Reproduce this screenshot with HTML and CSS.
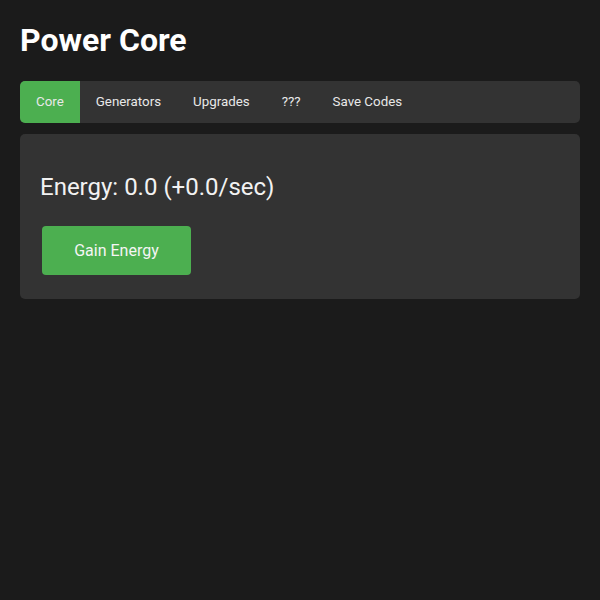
FILE: index.html
```html
<!DOCTYPE html>
<html lang="en">

<head>
    <meta charset="UTF-8"/>
    <title>Power Core</title>
    <link rel="stylesheet" href="styles.css">
</head>

<body>
<h1>Power Core</h1>
<nav class="tabs">
    <a href="javascript:" class="tab active">Core</a>
    <a href="javascript:" class="tab">Generators</a>
    <a href="javascript:" class="tab">Upgrades</a>
    <a href="javascript:" class="tab">???</a>
    <a href="javascript:" class="tab">Save Codes</a>
</nav>

<div class="panel">
    <p class="energy">Energy: 0.0 (+0.0/sec)</p>
    <button class="gain">Gain Energy</button>
</div>
</body>

</html>
```

FILE: styles.css
```css
* {
    margin: 0;
    padding: 0;
    box-sizing: border-box;
}

body {
    background: #1b1b1b;
    color: #eee;
    font-family: Roboto, "Liberation Sans", sans-serif;
    padding: 21px 20px;
}

h1 {
    font-size: 32px;
    font-weight: 700;
    color: #fff;
    line-height: 38px;
    margin-bottom: 22px;
}

a {
    text-decoration: none;
    color: #e8e8e8;
}

.tabs {
    display: flex;
    background: #333;
    border-radius: 5px;
    overflow: hidden;
    height: 42px;
}

.tab {
    padding: 0 16px;
    font-size: 13.33px;
    line-height: 42px;
}

.tab.active {
    background: #4caf50;
}

.panel {
    margin-top: 11px;
    background: #333;
    border-radius: 5px;
    padding: 20px 20px 24px;
}

.energy {
    font-size: 24px;
    line-height: 28px;
    margin: 19px 0 25px;
    color: #f2f2f2;
}

.gain {
    margin-left: 2px;
    width: 149px;
    height: 49px;
    border: 0;
    border-radius: 4px;
    background: #4caf50;
    color: #f5f5f5;
    font-family: Roboto, "Liberation Sans", sans-serif;
    font-size: 16px;
    cursor: pointer;
}
```
